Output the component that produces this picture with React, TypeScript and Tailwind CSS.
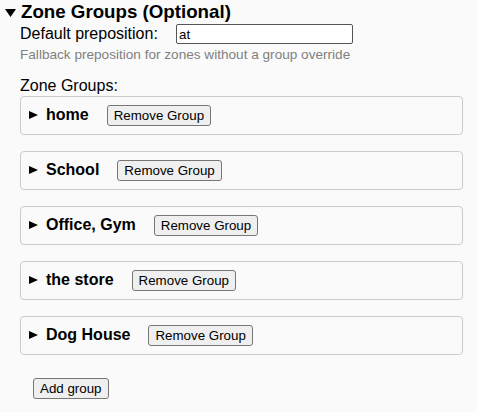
import { useState } from "react";

interface ZoneGroup {
  id: number;
  name: string;
}

const initialGroups: ZoneGroup[] = [
  { id: 1, name: "home" },
  { id: 2, name: "School" },
  { id: 3, name: "Office, Gym" },
  { id: 4, name: "the store" },
  { id: 5, name: "Dog House" },
];

const nativeButton =
  "inline-block h-[21px] px-[6px] py-[1px] border border-[#767676] rounded-[3px] bg-[#efefef] text-[13.33px] leading-[normal] text-black align-baseline hover:bg-[#e5e5e5]";

// disclosure arrow drawn by hand so its size stays fixed across fonts
function Caret({ open, w, h, className }: { open: boolean; w: number; h: number; className: string }) {
  return (
    <svg width={w} height={h} viewBox={`0 0 ${w} ${h}`} className={className}>
      {open ? (
        <polygon points={`0,0 ${w},0 ${w / 2},${h}`} fill="#000" />
      ) : (
        <polygon points={`0,0 ${w},${h / 2} 0,${h}`} fill="#000" />
      )}
    </svg>
  );
}

function GroupRow({ group, onRemove }: { group: ZoneGroup; onRemove: () => void }) {
  const [open, setOpen] = useState(false);
  return (
    <details
      open={open}
      onToggle={(e) => setOpen((e.target as HTMLDetailsElement).open)}
      className="rounded-[4px] border border-[#cccccc] bg-[#fafafa] p-2"
    >
      <summary className="cursor-pointer list-none text-[16px] [&::-webkit-details-marker]:hidden">
        <Caret open={open} w={9} h={8} className="mr-[8px] inline-block align-[1px]" />
        <strong className="font-bold">{group.name}</strong>
        <button
          type="button"
          onClick={(e) => {
            e.preventDefault();
            onRemove();
          }}
          className={`ml-[18px] ${nativeButton}`}
        >
          Remove Group
        </button>
      </summary>
    </details>
  );
}

export default function App() {
  const [preposition, setPreposition] = useState("at");
  const [groups, setGroups] = useState<ZoneGroup[]>(initialGroups);
  const [open, setOpen] = useState(true);

  function removeGroup(id: number) {
    setGroups((g) => g.filter((x) => x.id !== id));
  }

  function addGroup() {
    setGroups((g) => [...g, { id: Date.now(), name: "New group" }]);
  }

  return (
    <div className="min-h-screen bg-[#fafafa] pl-[4px] pt-[1px] font-['Liberation_Sans',Arial,sans-serif] text-black leading-[normal]">
      <details open={open} onToggle={(e) => setOpen((e.target as HTMLDetailsElement).open)}>
        <summary className="cursor-pointer list-none text-[18.72px] font-bold [&::-webkit-details-marker]:hidden">
          <Caret open={open} w={11} h={8} className="ml-[1px] mr-[5px] inline-block align-[1px]" />
          Zone Groups (Optional)
        </summary>

        <div className="pl-[16px]">
          <div className="mt-[1px] flex items-baseline text-[16px]">
            <label htmlFor="default-prep" className="w-[156px] shrink-0">
              Default preposition:
            </label>
            <input
              id="default-prep"
              value={preposition}
              onChange={(e) => setPreposition(e.target.value)}
              className="h-[20px] w-[177px] rounded-[2px] border border-[#555] bg-white px-[2px] py-[1px] text-[13.33px] leading-[normal] outline-none"
            />
          </div>
          <div className="mt-[3px] text-[13.6px] text-[#808080]">
            Fallback preposition for zones without a group override
          </div>

          <div className="mt-[15px] text-[16px]">Zone Groups:</div>

          <div className="mt-[1px] flex w-[443px] flex-col gap-[16px]">
            {groups.map((g) => (
              <GroupRow key={g.id} group={g} onRemove={() => removeGroup(g.id)} />
            ))}
          </div>

          <button type="button" onClick={addGroup} className={`ml-[13px] mt-[23px] ${nativeButton}`}>
            Add group
          </button>
        </div>
      </details>
    </div>
  );
}
